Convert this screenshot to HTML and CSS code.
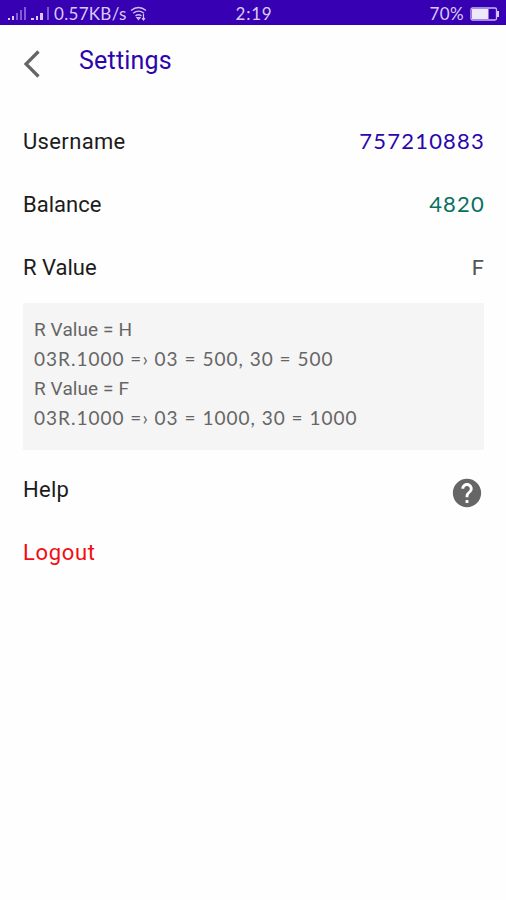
FILE: index.html
```html
<!DOCTYPE html>
<html lang="en">
<head>
<meta charset="utf-8">
<title>Settings</title>
<link rel="stylesheet" href="styles.css">
</head>
<body>
<div class="status">
  <div class="status-left">
    <svg class="signals" width="43" height="14" viewBox="0 0 43 14" fill="#d8ccf3">
      <path d="M0 11h2v2H0zM4 9h2v4H4zM23 11h3v2h-3zM28 9h2v4h-2zM32 6h3v7h-3z"/>
      <path d="M8 6h2v7H8zM12 3h2v10h-2zM16 0h2v13h-2zM39 0h2v13h-2z" opacity=".45"/>
    </svg>
    <span class="speed">0.57KB/s</span>
    <svg class="wifi" width="18" height="15" viewBox="0 0 18 15" fill="none" stroke="#d0c2f0" stroke-width="1.4">
      <path d="M1 4.5Q8.500-1.500 16 4.500M3.200 7.300Q8.500 3 14 7.300M5.500 10Q8.500 7.500 11.500 10"/>
      <path d="M7 11.500h3l-1.500 2zM13.500 8v5.500M12 12l1.500 2 1.500-2" stroke-width="1.200"/>
    </svg>
  </div>
  <span class="clock">2:19</span>
  <div class="status-right">
    <span class="percent">70%</span>
    <svg width="30" height="14" viewBox="0 0 30 14">
      <rect x="1" y="1" width="25.500" height="12" rx="1.500" fill="none" stroke="#c9baf0" stroke-width="1.300"/>
      <path d="M2 2h16.500v10H2z" fill="#eee8fb"/>
      <path d="M27 4h2v6h-2z" fill="#d8ccf3"/>
    </svg>
  </div>
</div>
<header class="header">
  <svg class="back" width="18" height="28" viewBox="0 0 18 28" fill="none" stroke="#666" stroke-width="3.200"><path d="M16.500 1.500 4 14l12.500 12.500"/></svg>
  <h1 class="title">Settings</h1>
</header>
<main class="content">
  <div class="row"><span class="label username">Username</span><span class="value account">757210883</span></div>
  <div class="row"><span class="label balance">Balance</span><span class="value amount">4820</span></div>
  <div class="row"><span class="label rvalue">R Value</span><span class="value mode">F</span></div>
  <div class="note">
    <p class="name">R Value = H</p>
    <p class="rule">03R.1000 =&rsaquo; 03 = 500, 30 = 500</p>
    <p class="name">R Value = F</p>
    <p class="rule">03R.1000 =&rsaquo; 03 = 1000, 30 = 1000</p>
  </div>
  <div class="row"><span class="label help">Help</span>
    <svg class="help-icon" width="34" height="34" viewBox="0 0 24 24" fill="#666"><path d="M12 2C6.480 2 2 6.480 2 12s4.480 10 10 10 10-4.480 10-10S17.520 2 12 2zm1 17h-2v-2h2v2zm2.070-7.750l-.9.920C13.450 12.900 13 13.500 13 15h-2v-.5c0-1.100.450-2.100 1.170-2.830l1.240-1.260c.370-.360.590-.860.590-1.410 0-1.100-.9-2-2-2s-2 .9-2 2H8c0-2.210 1.790-4 4-4s4 1.790 4 4c0 .880-.360 1.680-.930 2.250z"/></svg>
  </div>
  <div class="row"><span class="label logout">Logout</span></div>
</main>
</body>
</html>
```
FILE: styles.css
```css
* { box-sizing: border-box; }
body {
  margin: 0;
  min-height: 900px;
  background: #fefefe;
  font-family: Roboto, "Liberation Sans", sans-serif;
}
svg { display: block; flex: none; }
.status {
  display: grid;
  grid-template-columns: 1fr auto 1fr;
  align-items: center;
  height: 25px;
  padding: 2px 6px 0 8px;
  background: #3700b3;
  color: #d8ccf3;
  font: 17px/20px Lato, sans-serif;
}
.status-left, .status-right { display: flex; align-items: center; }
.status-right { justify-content: flex-end; gap: 6px; }
.signals { margin-right: 3px; }
.speed { letter-spacing: .3px; margin-right: 3px; }
.clock { letter-spacing: .8px; }
.percent { letter-spacing: .4px; }
.header {
  display: flex;
  height: 85px;
  padding: 25px 0 0 22px;
}
.title {
  margin: -4px 0 0 39px;
  color: #2b05ad;
  font-size: 25px;
  letter-spacing: .2px;
  line-height: 30px;
  font-weight: 400;
}
.content { padding: 0 22px 0 23px; }
.row {
  display: flex;
  justify-content: space-between;
  align-items: center;
  height: 63px;
}
.label { color: #1c1c1c; font-size: 22px; line-height: 28px; }
.username { letter-spacing: .35px; }
.help { letter-spacing: .3px; }
.value { font: 22px/28px Lato, sans-serif; letter-spacing: 1.2px; margin: -2px -1px 0 0; }
.account { color: #2b05ad; }
.amount { color: #087060; }
.mode { color: #555; letter-spacing: 0; margin-right: 0; }
.note {
  height: 147px;
  margin: 4px 0 8px;
  padding: 12px 11px;
  background: #f5f5f5;
  color: #666;
}
.note p { margin: 0; line-height: 29.500px; white-space: nowrap; }
.name { font-size: 19px; letter-spacing: .1px; }
.note .rule {
  font-family: Lato, sans-serif;
  font-size: 19px;
  line-height: 28px;
  padding-bottom: 1.500px;
  letter-spacing: 1px;
}
.help-icon { margin: 7px 0 0; }
.label.logout { color: #f20d12; letter-spacing: .65px; }
```
